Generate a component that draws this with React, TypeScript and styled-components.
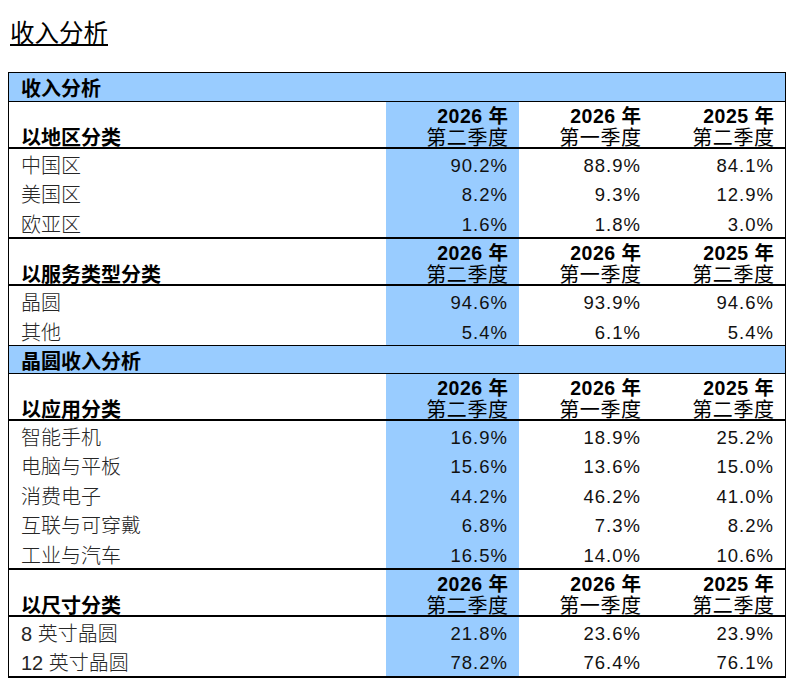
import React from 'react'
import styled, { createGlobalStyle } from 'styled-components'

const GlobalStyle = createGlobalStyle`
    body {
        margin: 0;
        background: #ffffff;
        font-family: "Liberation Sans", "Noto Sans CJK SC", sans-serif;
        color: #000;
    }
`

type Row = [string, string, string, string]

interface IGroup {
    label: string
    rows: Row[]
}

interface ISection {
    title: string
    groups: IGroup[]
}

const periods: [string, string][] = [
    ['2026 年', '第二季度'],
    ['2026 年', '第一季度'],
    ['2025 年', '第二季度'],
]

const sections: ISection[] = [
    {
        title: '收入分析',
        groups: [
            {
                label: '以地区分类',
                rows: [
                    ['中国区', '90.2%', '88.9%', '84.1%'],
                    ['美国区', '8.2%', '9.3%', '12.9%'],
                    ['欧亚区', '1.6%', '1.8%', '3.0%'],
                ],
            },
            {
                label: '以服务类型分类',
                rows: [
                    ['晶圆', '94.6%', '93.9%', '94.6%'],
                    ['其他', '5.4%', '6.1%', '5.4%'],
                ],
            },
        ],
    },
    {
        title: '晶圆收入分析',
        groups: [
            {
                label: '以应用分类',
                rows: [
                    ['智能手机', '16.9%', '18.9%', '25.2%'],
                    ['电脑与平板', '15.6%', '13.6%', '15.0%'],
                    ['消费电子', '44.2%', '46.2%', '41.0%'],
                    ['互联与可穿戴', '6.8%', '7.3%', '8.2%'],
                    ['工业与汽车', '16.5%', '14.0%', '10.6%'],
                ],
            },
            {
                label: '以尺寸分类',
                rows: [
                    ['8 英寸晶圆', '21.8%', '23.6%', '23.9%'],
                    ['12 英寸晶圆', '78.2%', '76.4%', '76.1%'],
                ],
            },
        ],
    },
]

function App() {
    return (
        <>
            <GlobalStyle />
            <Page>
                <Title>收入分析</Title>
                <Table>
                    {sections.map((section, si) => (
                        <Section key={section.title}>
                            <SectionTitle $first={si === 0}>{section.title}</SectionTitle>
                            {section.groups.map((group, gi) => (
                                <Group key={group.label} $first={gi === 0}>
                                    <HeaderRow>
                                        <HeaderLabel>{group.label}</HeaderLabel>
                                        {periods.map(([year, quarter], pi) => (
                                            <HeaderCell key={pi} $hl={pi === 0}>
                                                <Year>{year}</Year>
                                                <Quarter>{quarter}</Quarter>
                                            </HeaderCell>
                                        ))}
                                    </HeaderRow>
                                    {group.rows.map((row) => (
                                        <DataRow key={row[0]}>
                                            <Label>{row[0]}</Label>
                                            <Value $hl>{row[1]}</Value>
                                            <Value>{row[2]}</Value>
                                            <Value>{row[3]}</Value>
                                        </DataRow>
                                    ))}
                                </Group>
                            ))}
                        </Section>
                    ))}
                </Table>
            </Page>
        </>
    )
}

export default App

const BLUE = '#99ccff'

const Page = styled.div`
    padding: 0 0 20px 8px;
`

const Title = styled.h1`
    margin: 0 0 23px;
    padding: 19px 0 0 2px;
    font-size: 24.5px;
    line-height: 30px;
    font-weight: 400;
    text-decoration: underline;
    text-decoration-thickness: 1.5px;
    text-underline-offset: 2px;
`

const Table = styled.div`
    width: 778px;
    box-sizing: border-box;
    border: 1px solid #000;
    border-bottom-width: 2px;
`

const Section = styled.div``

const SectionTitle = styled.div<{ $first?: boolean }>`
    background: ${BLUE};
    height: 29px;
    box-sizing: border-box;
    padding: 4px 0 0 12px;
    line-height: 25px;
    font-size: 20px;
    font-weight: 700;
    border-bottom: 1px solid #000;
    border-top: ${(p) => (p.$first ? 'none' : '1px solid #000')};
`

const Group = styled.div<{ $first?: boolean }>`
    border-top: ${(p) => (p.$first ? 'none' : '2px solid #000')};
`

const grid = `
    display: grid;
    grid-template-columns: 377px 133px 133px 1fr;
`

const HeaderRow = styled.div`
    ${grid}
    height: 47px;
    box-sizing: border-box;
    border-bottom: 2px solid #000;
`

const HeaderLabel = styled.div`
    display: flex;
    align-items: flex-end;
    padding-left: 12px;
    font-size: 20px;
    line-height: 17px;
    font-weight: 700;
`

const HeaderCell = styled.div<{ $hl?: boolean }>`
    display: flex;
    flex-direction: column;
    justify-content: flex-end;
    align-items: flex-end;
    padding-right: 11px;
    background: ${(p) => (p.$hl ? BLUE : 'transparent')};
    font-size: 20px;
`

const Year = styled.span`
    font-size: 19.5px;
    line-height: 28px;
    font-weight: 700;
    letter-spacing: 0.5px;
    margin-right: -0.5px;
`

const Quarter = styled.span`
    line-height: 17px;
    font-weight: 400;
    letter-spacing: 0.6px;
    margin-right: -0.6px;
`

const DataRow = styled.div`
    ${grid}
    height: 29.4px;
`

const Label = styled.div`
    padding: 5px 0 0 12px;
    font-size: 20px;
    line-height: 24.4px;
    font-weight: 300;
    color: #262626;
`

const Value = styled.div<{ $hl?: boolean }>`
    padding: 5px 11px 0 0;
    text-align: right;
    font-size: 18.5px;
    line-height: 24.4px;
    letter-spacing: 1px;
    background: ${(p) => (p.$hl ? BLUE : 'transparent')};
    color: #111;
`
